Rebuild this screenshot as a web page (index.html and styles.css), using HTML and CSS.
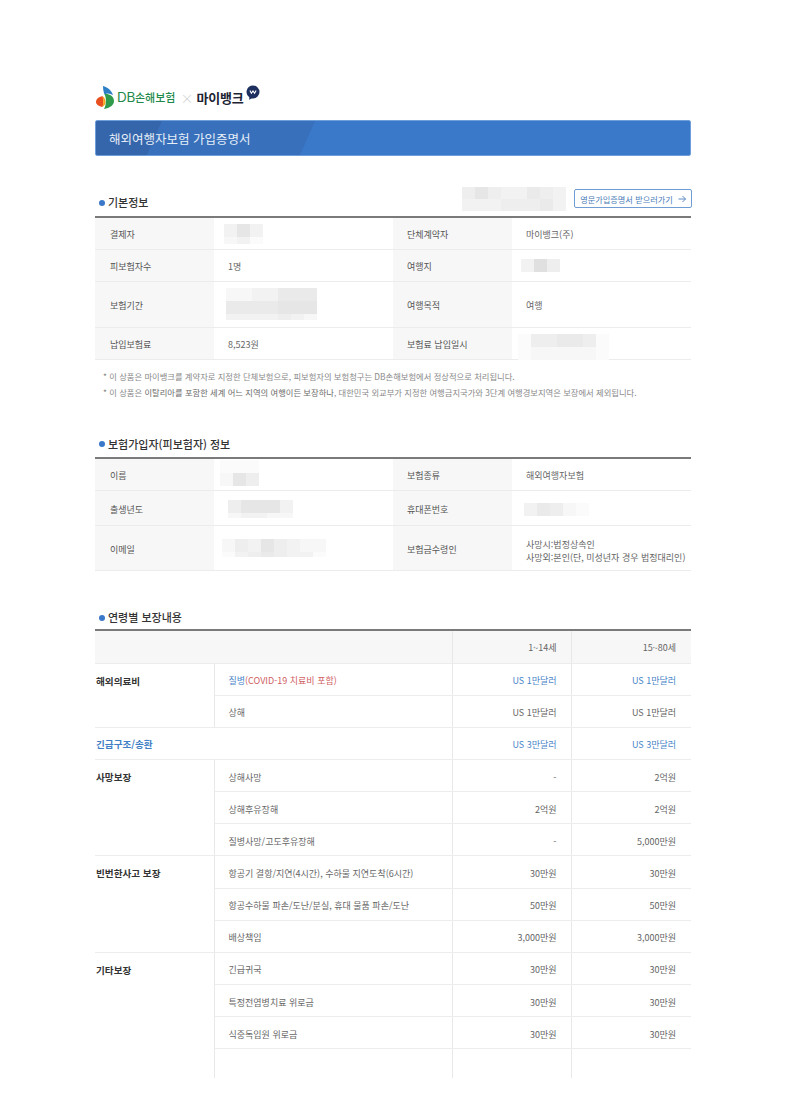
FILE: index.html
```html
<!DOCTYPE html>
<html lang="ko">
<head>
<meta charset="utf-8">
<title>해외여행자보험 가입증명서</title>
<link rel="stylesheet" href="styles.css">
</head>
<body>
<main class="page">
  <header class="logos">
    <svg class="db-mark" viewBox="0 0 18 23" width="18" height="23" aria-hidden="true">
      <path d="M6.500 10C2.500 11 0 13 0 16C0 18.500 3 20.500 6.500 21C7.500 18 7.500 13 6.500 10Z" fill="#e8501f"/>
      <path d="M6.500 10C8.500 11.500 9.500 13.500 9.500 16C9.500 18 8.500 19.500 6.500 21C7.500 18 7.500 13 6.500 10Z" fill="#f4a51c"/>
      <path d="M7 0C11 1 15.500 4 17 9C14 7.500 11 7 8.500 8.500C7.500 6 7 3 7 0Z" fill="#2c7fc4"/>
      <path d="M8.500 8C13 7.500 18 10 18 15C18 19 14 22 8 23C10.500 19 10.500 12 8.500 8Z" fill="#2f9a4c"/>
    </svg>
    <span class="db-name"><b class="db-latin">DB</b>손해보험</span>
    <span class="times">×</span>
    <span class="mybank">마이뱅크</span>
    <span class="bubble" aria-hidden="true">
      <svg viewBox="0 0 14 15" width="14" height="15">
        <path d="M7 0.500A6.500 6.500 0 0 1 7 13.500L5.500 13.400L3.200 14.800L3.300 12.300A6.500 6.500 0 0 1 7 0.500Z" fill="#1d2f5e"/>
        <path d="M3.900 5.600L5.400 8.300L7 5.900L8.600 8.300L10.100 5.600" fill="none" stroke="#fff" stroke-width="1.100"/>
      </svg>
    </span>
  </header>

  <h1 class="banner">해외여행자보험 가입증명서</h1>

  <section class="sec sec-basic">
    <div class="sec-head">
      <h2 class="sec-title">기본정보</h2>
      <div class="mosaic m-head">
        <i class="s3"></i><i class="s5"></i><i class="s3"></i><i class="s2"></i><i class="s2"></i><i class="s4"></i><i class="s3"></i><i class="s2"></i>
        <i class="s2"></i><i class="s2"></i><i class="s2"></i><i class="s3"></i><i class="s3"></i><i class="s3"></i><i class="s4"></i><i class="s2"></i>
      </div>
      <a class="eng-btn" href="#">영문가입증명서 받으러가기
        <svg viewBox="0 0 8 8" width="8" height="8" aria-hidden="true"><path d="M0.500 4H7.500M4.500 1L7.500 4L4.500 7" fill="none" stroke="#4a7fc0" stroke-width="0.900"/></svg>
      </a>
    </div>
    <table class="info">
      <colgroup><col class="c-l"><col class="c-v"><col class="c-l"><col class="c-v"></colgroup>
      <tr class="r32">
        <th>결제자</th>
        <td><div class="mosaic m-payer"><i class="s2"></i><i class="s5"></i><i class="s2"></i><i class="s1"></i><i class="s2"></i><i class="s0"></i></div></td>
        <th>단체계약자</th><td>마이뱅크(주)</td>
      </tr>
      <tr class="r32">
        <th>피보험자수</th><td>1명</td>
        <th>여행지</th>
        <td><div class="mosaic m-dest"><i class="s2"></i><i class="s6"></i><i class="s3"></i></div></td>
      </tr>
      <tr class="r46">
        <th>보험기간</th>
        <td><div class="mosaic m-period">
          <i class="s1"></i><i class="s1"></i><i class="s2"></i><i class="s2"></i><i class="s4"></i><i class="s4"></i><i class="s4"></i>
          <i class="s4"></i><i class="s4"></i><i class="s4"></i><i class="s4"></i><i class="s5"></i><i class="s5"></i><i class="s5"></i>
          <i class="s2"></i><i class="s2"></i><i class="s2"></i><i class="s2"></i><i class="s3"></i><i class="s2"></i><i class="s1"></i>
        </div></td>
        <th>여행목적</th><td>여행</td>
      </tr>
      <tr class="r32">
        <th>납입보험료</th><td>8,523원</td>
        <th>보험료 납입일시</th>
        <td><div class="mosaic m-paid">
          <i class="s0"></i><i class="s3"></i><i class="s3"></i><i class="s4"></i><i class="s4"></i><i class="s3"></i><i class="s0"></i>
          <i class="s0"></i><i class="s1"></i><i class="s1"></i><i class="s1"></i><i class="s1"></i><i class="s1"></i><i class="s0"></i>
        </div></td>
      </tr>
    </table>
    <ul class="notes">
      <li>* 이 상품은 마이뱅크를 계약자로 지정한 단체보험으로, 피보험자의 보험청구는 DB손해보험에서 정상적으로 처리됩니다.</li>
      <li>* 이 상품은 <em class="strong">이탈리아를 포함한 세계 어느 지역의 여행이든 보장하나</em>, 대한민국 외교부가 지정한 여행금지국가와 3단계 여행경보지역은 보장에서 제외됩니다.</li>
    </ul>
  </section>

  <section class="sec sec-insured">
    <div class="sec-head">
      <h2 class="sec-title">보험가입자(피보험자) 정보</h2>
    </div>
    <table class="info">
      <colgroup><col class="c-l"><col class="c-v"><col class="c-l"><col class="c-v"></colgroup>
      <tr class="r33">
        <th>이름</th>
        <td><div class="mosaic m-name"><i class="s0"></i><i class="s0"></i><i class="s0"></i><i class="s1"></i><i class="s5"></i><i class="s3"></i></div></td>
        <th>보험종류</th><td>해외여행자보험</td>
      </tr>
      <tr class="r35">
        <th>출생년도</th>
        <td><div class="mosaic m-birth"><i class="s3"></i><i class="s5"></i><i class="s5"></i><i class="s5"></i><i class="s2"></i><i class="s1"></i><i class="s2"></i><i class="s2"></i><i class="s1"></i><i class="s1"></i></div></td>
        <th>휴대폰번호</th>
        <td><div class="mosaic m-phone"><i class="s2"></i><i class="s4"></i><i class="s3"></i><i class="s1"></i><i class="s0"></i></div></td>
      </tr>
      <tr class="r45">
        <th>이메일</th>
        <td><div class="mosaic m-email">
          <i class="s1"></i><i class="s3"></i><i class="s2"></i><i class="s5"></i><i class="s3"></i><i class="s2"></i><i class="s1"></i><i class="s1"></i>
          <i class="s0"></i><i class="s2"></i><i class="s3"></i><i class="s4"></i><i class="s3"></i><i class="s2"></i><i class="s2"></i><i class="s0"></i>
        </div></td>
        <th>보험금수령인</th>
        <td class="lines">사망시:법정상속인<br>사망외:본인(단, 미성년자 경우 법정대리인)</td>
      </tr>
    </table>
  </section>

  <section class="sec sec-cover">
    <div class="sec-head">
      <h2 class="sec-title">연령별 보장내용</h2>
    </div>
    <table class="cover">
      <colgroup><col class="c-group"><col class="c-item"><col class="c-age"><col class="c-age2"></colgroup>
      <tr class="head">
        <th colspan="2"></th><th class="amt">1~14세</th><th class="amt">15~80세</th>
      </tr>
      <tr>
        <th class="group" rowspan="2">해외의료비</th>
        <td class="item"><span class="blue">질병</span><span class="red">(COVID-19 치료비 포함)</span></td>
        <td class="amt blue">US 1만달러</td><td class="amt blue">US 1만달러</td>
      </tr>
      <tr><td class="item">상해</td><td class="amt">US 1만달러</td><td class="amt">US 1만달러</td></tr>
      <tr>
        <th class="group wide blue" colspan="2">긴급구조/송환</th>
        <td class="amt blue">US 3만달러</td><td class="amt blue">US 3만달러</td>
      </tr>
      <tr>
        <th class="group" rowspan="3">사망보장</th>
        <td class="item">상해사망</td><td class="amt">-</td><td class="amt">2억원</td>
      </tr>
      <tr><td class="item">상해후유장해</td><td class="amt">2억원</td><td class="amt">2억원</td></tr>
      <tr><td class="item">질병사망/고도후유장해</td><td class="amt">-</td><td class="amt">5,000만원</td></tr>
      <tr>
        <th class="group" rowspan="3">빈번한사고 보장</th>
        <td class="item">항공기 결항/지연(4시간), 수하물 지연도착(6시간)</td><td class="amt">30만원</td><td class="amt">30만원</td>
      </tr>
      <tr><td class="item">항공수하물 파손/도난/분실, 휴대 물품 파손/도난</td><td class="amt">50만원</td><td class="amt">50만원</td></tr>
      <tr><td class="item">배상책임</td><td class="amt">3,000만원</td><td class="amt">3,000만원</td></tr>
      <tr>
        <th class="group open" rowspan="4">기타보장</th>
        <td class="item">긴급귀국</td><td class="amt">30만원</td><td class="amt">30만원</td>
      </tr>
      <tr><td class="item">특정전염병치료 위로금</td><td class="amt">30만원</td><td class="amt">30만원</td></tr>
      <tr><td class="item">식중독입원 위로금</td><td class="amt">30만원</td><td class="amt">30만원</td></tr>
      <tr class="tail"><td class="item"></td><td class="amt"></td><td class="amt"></td></tr>
    </table>
  </section>
</main>
</body>
</html>
```
FILE: styles.css
```css
* { box-sizing: border-box; }
html, body { margin: 0; padding: 0; background: #fff; }
body {
  font-family: "Noto Sans CJK KR", "Noto Sans", sans-serif;
  color: #666;
  font-size: 9px;
}
.page { width: 596px; margin-left: 95px; padding-top: 85px; padding-bottom: 33px; }

/* logos */
.logos { display: flex; align-items: center; height: 25px; margin-bottom: 10px; padding-left: 1px; }
.db-mark { flex: none; margin-top: -1px; }
.db-name { margin-left: 3px; font-size: 11px; font-weight: 500; color: #1f8a4c; line-height: 1; letter-spacing: 0; white-space: nowrap; }
.db-latin { font-family: "Inter", sans-serif; font-weight: 400; font-size: 13.500px; letter-spacing: -0.300px; }
.times { margin: 0 3px 0 5px; font-size: 13px; color: #d8d8d8; line-height: 1; }
.mybank { font-size: 13px; font-weight: 700; color: #1d2433; line-height: 1; letter-spacing: -0.200px; white-space: nowrap; }
.bubble { display: flex; margin: -11px 0 0 2px; }

/* banner */
.banner {
  margin: 0;
  height: 36px;
  padding: 0 13px;
  font-size: 12.500px;
  font-weight: 400;
  line-height: 35px;
  color: #e6eef8;
  border: 1px solid #6f9fdb;
  border-radius: 2px;
  background:
    linear-gradient(114deg, #3566ac 0, #3566ac 60px, rgba(0,0,0,0) 60.500px),
    linear-gradient(114deg, #3870bb 0, #3870bb 200px, #3a79ca 200.500px);
}

/* sections */
.sec-basic { margin-top: 34px; }
.sec-insured { margin-top: 36px; }
.sec-cover { margin-top: 38px; }
.sec-head { position: relative; display: flex; align-items: flex-end; justify-content: space-between; height: 26px; }
.sec-insured .sec-head { height: 21px; }
.sec-cover .sec-head { height: 20px; }
.sec-title {
  display: flex;
  align-items: center;
  margin: 0 0 6px;
  height: 16px;
  font-size: 11px;
  font-weight: 500;
  color: #333;
}
.sec-insured .sec-title { margin-bottom: 5px; }
.sec-cover .sec-title { margin-bottom: 4px; }
.sec-title::before {
  content: "";
  flex: none;
  width: 6px;
  height: 6px;
  margin: 1px 3px 0 4px;
  border-radius: 50%;
  background: #3a78c9;
}
.eng-btn {
  display: flex;
  align-items: center;
  justify-content: center;
  gap: 5px;
  width: 118px;
  height: 19px;
  margin: 0 -1px 8px 0;
  font-size: 8.200px;
  color: #4a7cb8;
  text-decoration: none;
  border: 1px solid #6f9dd3;
  border-radius: 2px;
  background: #fff;
}

/* info tables */
table { width: 100%; border-collapse: collapse; table-layout: fixed; }
.c-l { width: 119px; }
.c-v { width: 179px; }
.info { border-top: 2px solid #7a7a7a; }
.info th, .info td { padding: 4px 14px 0; border-bottom: 1px solid #ececec; font-size: 9px; line-height: 14px; color: #666; text-align: left; vertical-align: middle; position: relative; }
.info th { font-weight: 400; color: #555; background: #f7f7f7; }
.info th:first-child { padding-left: 15px; }
.r32 { height: 32px; }
.r33 { height: 33px; }
.r35 { height: 35px; }
.r45 { height: 45px; }
.r46 { height: 46px; }
.info td.lines { padding-top: 6px; padding-right: 0; font-size: 9px; line-height: 13.500px; white-space: nowrap; }

/* redacted values */
.mosaic { position: absolute; display: grid; grid-auto-rows: 13px; }
.mosaic i { display: block; }
.s0 { background: #fbfbfb; }
.s1 { background: #f7f7f7; }
.s2 { background: #f2f2f2; }
.s3 { background: #eeeeee; }
.s4 { background: #eaeaea; }
.s5 { background: #e6e6e6; }
.s6 { background: #e0e0e0; }
.m-head { left: 367px; top: -3px; grid-template-columns: repeat(8, 13px); grid-auto-rows: 12px; }
.m-payer { left: 10px; top: 6px; grid-template-columns: repeat(3, 13px); grid-template-rows: 13px 7px; }
.m-dest { left: 9px; top: 9px; grid-template-columns: repeat(3, 13px); }
.m-period { left: 12px; top: 6px; grid-template-columns: repeat(7, 13px); grid-template-rows: 13px 13px 6px; }
.m-paid { left: 6px; top: 6px; grid-template-columns: repeat(7, 13px); grid-template-rows: 13px 13px; }
.m-name { left: 6px; top: 1px; grid-template-columns: repeat(3, 13px); }
.m-birth { left: 14px; top: 9px; grid-template-columns: repeat(5, 13px); grid-template-rows: 13px 5px; }
.m-phone { left: 12px; top: 12px; grid-template-columns: repeat(5, 13px); }
.m-email { left: 8px; top: 13px; grid-template-columns: repeat(8, 13px); grid-template-rows: 13px 5px; }

/* notes */
.notes { list-style: none; margin: 8px 0 0; padding: 0 0 0 8px; }
.notes li { height: 16px; font-size: 8.300px; line-height: 16px; color: #888; white-space: nowrap; }
.notes .strong { font-style: normal; color: #6a6a6a; }

/* coverage table */
.c-group { width: 119px; }
.c-item { width: 238px; }
.c-age { width: 119px; }
.c-age2 { width: 120px; }
.cover { border-top: 2px solid #7a7a7a; }
.cover tr { height: 32.170px; }
.cover tr.head { height: 33px; }
.cover th, .cover td { padding: 4px 0 0; border-bottom: 1px solid #ececec; font-size: 9px; line-height: 14px; color: #666; font-weight: 400; }
.cover .head th { padding-top: 2px; background: #f7f7f7; }
.cover th.group { padding: 10px 0 0 1px; font-size: 9.600px; font-weight: 700; color: #333; text-align: left; vertical-align: top; border-right: 1px solid #e8e8e8; }
.cover th.group.wide { padding-top: 2px; vertical-align: middle; border-right: 0; color: #3f7fc6; }
.cover th.group.open { border-bottom: 0; }
.cover .item { padding-left: 14px; white-space: nowrap; }
.cover .amt { padding-right: 14px; text-align: right; border-left: 1px solid #e8e8e8; }
.cover tr > .amt:last-child { padding-right: 15px; }
.cover .blue, .cover td.blue { color: #4a86c8; }
.cover .red { color: #d0605f; }
.cover tr.tail { height: 29px; }
.cover tr.tail td { border-bottom: 0; }
```
